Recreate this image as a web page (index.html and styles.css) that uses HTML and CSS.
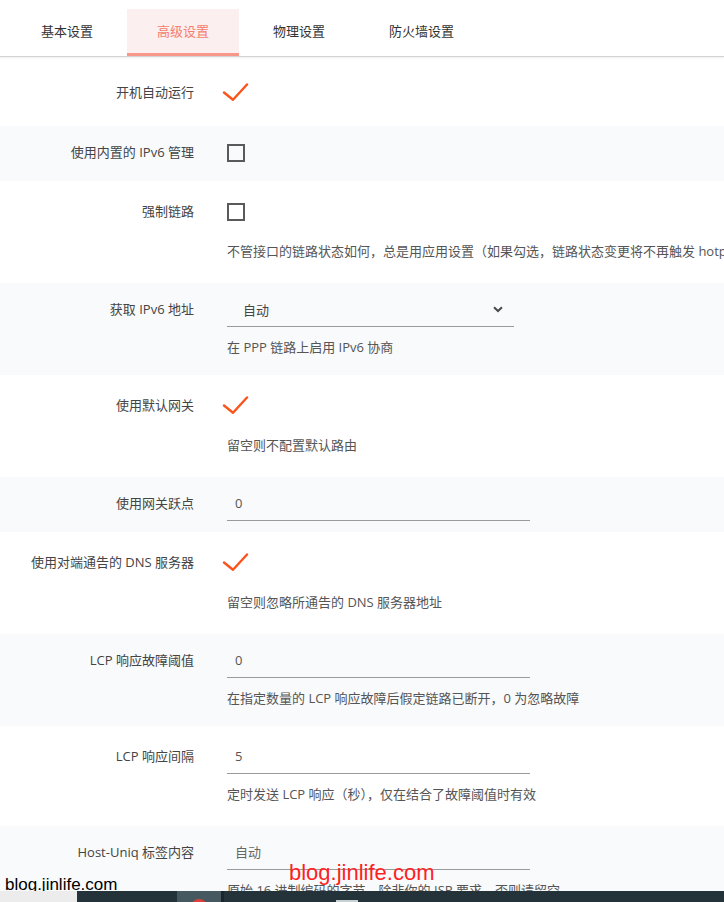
FILE: index.html
```html
<!DOCTYPE html>
<html lang="zh-CN">
<head>
<meta charset="utf-8">
<title>高级设置</title>
<link rel="stylesheet" href="styles.css">
</head>
<body>
<ul class="tabs">
  <li class="tab">基本设置</li>
  <li class="tab active">高级设置</li>
  <li class="tab">物理设置</li>
  <li class="tab">防火墙设置</li>
</ul>

<div class="form">
  <div class="row first">
    <div class="label">开机自动运行</div>
    <div class="field"><svg class="check" width="28" height="20" viewBox="0 0 28 20"><path d="M2 9.5 L11 16.8 L25 1.5" fill="none" stroke="#fa541c" stroke-width="2.4" stroke-linecap="round" stroke-linejoin="round"/></svg></div>
  </div>

  <div class="row alt nodesc">
    <div class="label">使用内置的 IPv6 管理</div>
    <div class="field"><span class="checkbox"></span></div>
  </div>

  <div class="row tall chk">
    <div class="label">强制链路</div>
    <div class="field"><span class="checkbox"></span></div>
    <div class="desc">不管接口的链路状态如何，总是用应用设置（如果勾选，链路状态变更将不再触发 hotplug 事件）</div>
  </div>

  <div class="row alt">
    <div class="label">获取 IPv6 地址</div>
    <div class="field">
      <div class="select"><span>自动</span><svg width="10" height="7" viewBox="0 0 10 7"><path d="M1 1.2 L5 5 L9 1.2" fill="none" stroke="#4a4a4a" stroke-width="2"/></svg></div>
    </div>
    <div class="desc">在 PPP 链路上启用 IPv6 协商</div>
  </div>

  <div class="row tall chk">
    <div class="label">使用默认网关</div>
    <div class="field"><svg class="check" width="28" height="20" viewBox="0 0 28 20"><path d="M2 9.5 L11 16.8 L25 1.5" fill="none" stroke="#fa541c" stroke-width="2.4" stroke-linecap="round" stroke-linejoin="round"/></svg></div>
    <div class="desc">留空则不配置默认路由</div>
  </div>

  <div class="row alt nodesc">
    <div class="label">使用网关跃点</div>
    <div class="field"><input class="input" type="text" value="0"></div>
  </div>

  <div class="row tall chk">
    <div class="label">使用对端通告的 DNS 服务器</div>
    <div class="field"><svg class="check" width="28" height="20" viewBox="0 0 28 20"><path d="M2 9.5 L11 16.8 L25 1.5" fill="none" stroke="#fa541c" stroke-width="2.4" stroke-linecap="round" stroke-linejoin="round"/></svg></div>
    <div class="desc">留空则忽略所通告的 DNS 服务器地址</div>
  </div>

  <div class="row alt">
    <div class="label">LCP 响应故障阈值</div>
    <div class="field"><input class="input" type="text" value="0"></div>
    <div class="desc">在指定数量的 LCP 响应故障后假定链路已断开，0 为忽略故障</div>
  </div>

  <div class="row tall">
    <div class="label">LCP 响应间隔</div>
    <div class="field"><input class="input" type="text" value="5"></div>
    <div class="desc">定时发送 LCP 响应（秒），仅在结合了故障阈值时有效</div>
  </div>

  <div class="row alt">
    <div class="label">Host-Uniq 标签内容</div>
    <div class="field"><input class="input ph" type="text" placeholder="自动"></div>
    <div class="desc">原始 16 进制编码的字节，除非你的 ISP 要求，否则请留空</div>
  </div>
</div>

<div class="wm-red">blog.jinlife.com</div>
<div class="wm-black">blog.jinlife.com</div>

<div class="taskbar">
  <div class="tb-light"></div>
  <div class="tb-dark"></div>
  <div class="tb-app"><span class="tb-dot"></span></div>
  <div class="tb-sep"></div>
  <div class="tb-rest"><span class="tb-mark"></span></div>
</div>
</body>
</html>
```

FILE: styles.css
```css
html, body {
  margin: 0;
  height: 100%;
  overflow: hidden;
  background: #fff;
}

body {
  position: relative;
  font-family: "Open Sans", "Noto Sans CJK SC", sans-serif;
  font-size: 13px;
  color: #444;
}

/* Tabs */
.tabs {
  display: flex;
  gap: 4px;
  margin: 0;
  padding: 9px 0 0 11px;
  list-style: none;
  border-bottom: 1px solid #d3d3d3;
  box-shadow: 0 1px 2px rgba(0, 0, 0, 0.07);
}

.tab {
  padding: 0 30px;
  height: 44px;
  line-height: 44px;
  border-bottom: 3px solid transparent;
  color: #333;
  white-space: nowrap;
}

.tab.active {
  background: #fcefef;
  color: #f47e6e;
  border-bottom-color: #f8968a;
}

/* Form rows */
.row {
  display: grid;
  grid-template-columns: 194px 1fr;
  column-gap: 33px;
  padding: 9px 0 18px;
}

.row.alt {
  background: #f8fafc;
}

.row.tall {
  padding: 13px 0 22px;
}

.row.first {
  padding: 18px 0 16px;
}

.row.nodesc {
  padding-bottom: 11px;
}

.label {
  grid-column: 1;
  text-align: right;
  line-height: 35px;
  white-space: nowrap;
  color: #444;
}

.field {
  grid-column: 2;
  height: 35px;
  display: flex;
  align-items: center;
}

.desc {
  grid-column: 2;
  margin-top: 10px;
  line-height: 20px;
  color: #555;
  white-space: nowrap;
}

.chk .desc {
  margin-top: 12px;
}

.check {
  display: block;
  margin-left: -5px;
}

.checkbox {
  display: block;
  width: 14px;
  height: 14px;
  border: 2px solid #5a5a5a;
}

.select {
  box-sizing: border-box;
  width: 287px;
  height: 35px;
  padding: 0 11px 0 16px;
  border-bottom: 1px solid #9a9a9a;
  display: flex;
  align-items: center;
  justify-content: space-between;
  color: #444;
}

.select svg {
  display: block;
}

.input {
  box-sizing: border-box;
  width: 303px;
  height: 35px;
  margin: 0;
  padding: 0 0 0 8px;
  border: 0;
  border-bottom: 1px solid #9a9a9a;
  background: transparent;
  font: inherit;
  color: #555;
  outline: none;
}

.input::placeholder {
  color: #666;
}

/* Watermarks */
.wm-red {
  position: absolute;
  left: 289px;
  top: 860px;
  font-family: "Liberation Sans", Arial, sans-serif;
  font-size: 22px;
  color: #ff1f1f;
  white-space: nowrap;
}

.wm-black {
  position: absolute;
  left: 5px;
  top: 875px;
  font-family: "Liberation Sans", Arial, sans-serif;
  font-size: 17px;
  color: #000;
  white-space: nowrap;
}

/* Taskbar strip */
.taskbar {
  position: fixed;
  left: 0;
  right: 0;
  bottom: 0;
  height: 11px;
  display: flex;
  overflow: hidden;
}

.tb-light {
  width: 77px;
  background: #ececec;
}

.tb-dark {
  width: 100px;
  background: #243239;
}

.tb-app {
  width: 44px;
  background: #475960;
  display: flex;
  justify-content: center;
  padding-top: 8px;
  box-sizing: border-box;
  overflow: hidden;
}

.tb-dot {
  flex: none;
  width: 16px;
  height: 16px;
  border-radius: 50%;
  background: #e0403a;
}

.tb-sep {
  width: 3px;
  background: #1b262c;
}

.tb-rest {
  flex: 1;
  background: #243239;
  overflow: hidden;
}

.tb-mark {
  display: block;
  width: 22px;
  height: 4px;
  margin: 9px 0 0 112px;
  background: #c9d0d3;
}
```
